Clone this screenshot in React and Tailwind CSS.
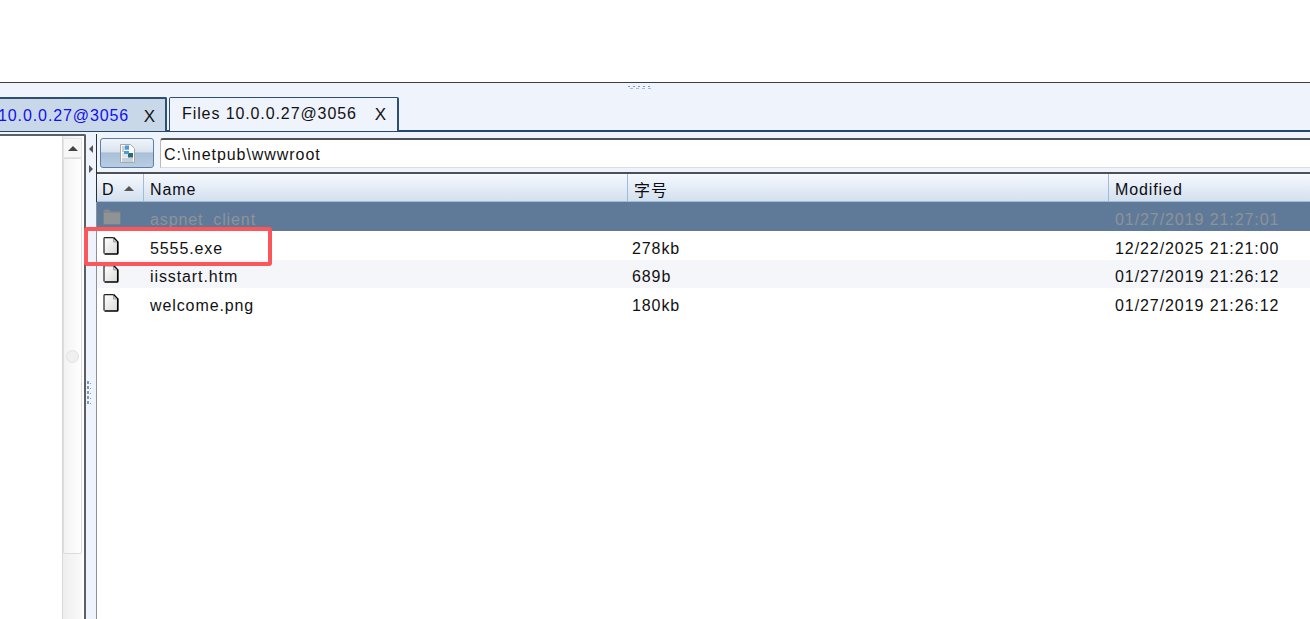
const font = { fontFamily: '"Liberation Sans", Arial, sans-serif' };

function FileIcon() {
  return (
    <svg width="16" height="18" viewBox="0 0 16 18" className="shrink-0">
      <defs>
        <linearGradient id="fg" x1="0" y1="0" x2="1" y2="1">
          <stop offset="0" stopColor="#ffffff" />
          <stop offset="1" stopColor="#d8d8d8" />
        </linearGradient>
      </defs>
      <path d="M1 1H10.5L15 5.5V17H1Z" fill="url(#fg)" />
      <path d="M1 16.5V1.5Q1 .7 1.8 .7H10.5" fill="none" stroke="#222" strokeWidth="1.2" />
      <path d="M10.5 .7L14.8 5V16Q14.8 17 13.8 17H1.5" fill="none" stroke="#000" strokeWidth="1.7" />
      <path d="M10.5 1.5V5H14" fill="#cfcfcf" stroke="#888" strokeWidth="0.7" />
    </svg>
  );
}

function FolderIcon() {
  return (
    <svg width="18" height="16" viewBox="0 0 18 16" className="shrink-0">
      <path d="M0.5 2 Q0.5 0.5 2 0.5 H6 L8 2.5 H17.5 V15.5 H0.5 Z" fill="#85888b" />
      <rect x="1" y="4" width="16" height="11" fill="#909396" />
    </svg>
  );
}

function Row({ icon, name, size, date, cls, textCls = "text-[#111]" }) {
  return (
    <div className={`flex items-center ${cls} ${textCls}`}>
      <div className="w-[47px] pl-[6px] flex items-center">{icon}</div>
      <div className="w-[482px] pl-[6px] pt-[6px] tracking-[0.9px]">{name}</div>
      <div className="w-[483px] pl-[6px] pt-[6px] tracking-[0.9px]">{size}</div>
      <div className="pl-[6px] pt-[6px] tracking-[0.92px] whitespace-nowrap">{date}</div>
    </div>
  );
}

function Th({ w, children, first }) {
  return (
    <div className={`${w} h-full flex items-center pt-[4px] ${first ? "pl-[5px]" : "pl-[6px] border-l border-[#9fbcd8]"} text-[#0c0c14] tracking-[0.9px]`}>
      {children}
    </div>
  );
}

function Grip({ vertical }) {
  const dots = [0, 1, 2, 3, 4];
  return (
    <div className={vertical ? "flex flex-col gap-[2px]" : "flex flex-col gap-[1px]"}>
      {vertical ? (
        dots.map((d) => (
          <div key={d} className="flex items-end gap-[1px]">
            <div className="w-[2px] h-[3px] bg-[#7f99b8]" />
            <div className="w-[1px] h-[1px] bg-[#7f99b8]" />
          </div>
        ))
      ) : (
        <>
          <div className="flex gap-[3px]">{dots.map((d) => <div key={d} className="w-[2px] h-[1px] bg-[#7f99b8]" />)}</div>
          <div className="flex gap-[3px] ml-[2px]">{dots.slice(1).map((d) => <div key={d} className="w-[3px] h-[1px] bg-[#a9bbd0]" />)}</div>
        </>
      )}
    </div>
  );
}

export default function App() {
  return (
    <div className="w-[1310px] h-[619px] overflow-hidden bg-white text-[16px] leading-none flex flex-col" style={font}>
      <div className="h-[82px] shrink-0 bg-white" />
      <div className="flex-1 min-h-0 flex flex-col border-t border-[#3a3f4a] bg-[#eff3fc]">
        {/* splitter grip + tabs */}
        <div className="h-[49px] shrink-0 flex flex-col border-b-2 border-[#25476b]">
          <div className="h-[14px] shrink-0 flex justify-center items-start pt-[3px] pr-[32px]">
            <Grip />
          </div>
          <div className="flex-1 flex items-stretch ml-[-20px] mb-[-1px]">
            <div className="w-[187px] flex items-center justify-between pl-[18px] pr-[9px] pt-[2px] bg-[#c9d8e9] border-t-2 border-r-2 border-[#2e4f73] rounded-tr-[2px] text-[#1010ee] tracking-[0.9px]">
              <span>10.0.0.27@3056</span>
              <span className="text-[#111] text-[17px]">X</span>
            </div>
            <div className="ml-[2px] w-[230px] flex items-center justify-between pl-[12px] pr-[10px] pb-[1px] bg-[#eff3fc] border-t border-l border-r-2 border-[#2e4f73] rounded-t-[2px] text-[#111] tracking-[0.9px]">
              <span>Files 10.0.0.27@3056</span>
              <span className="text-[17px]">X</span>
            </div>
          </div>
        </div>

        <div className="flex-1 min-h-0 flex pt-[2px]">
          {/* left pane */}
          <div className="w-[86px] shrink-0 flex bg-white border-t-2 border-r-2 border-[#5b5f66] rounded-tr-[2px]">
            <div className="w-[62px] shrink-0 bg-white" />
            <div className="w-[20px] shrink-0 flex flex-col bg-gradient-to-r from-[#eeeeee] to-[#fafafa] border-l border-[#d8d8d8]">
              <div className="h-[20px] shrink-0 flex items-center justify-center bg-[#f7f7f7] border border-[#e4e4e4] mt-[2px]">
                <div className="w-0 h-0 border-l-[5px] border-r-[5px] border-b-[5px] border-l-transparent border-r-transparent border-b-[#444]" />
              </div>
              <div className="h-[396px] shrink-0 flex items-center justify-center bg-gradient-to-r from-[#f3f3f3] to-[#ffffff] border border-[#dcdcdc] rounded-[2px]">
                <div className="w-[13px] h-[13px] rounded-full border border-[#e2e2e2] bg-[#f0f0f0]" />
              </div>
            </div>
          </div>

          {/* splitter */}
          <div className="w-[11px] shrink-0 flex flex-col items-start bg-[#eff3fc] border-r border-[#2d3038]">
            <div className="flex flex-col gap-[12px] pt-[11px] pl-[3px]">
              <div className="w-0 h-0 border-t-[4px] border-b-[4px] border-r-[4px] border-t-transparent border-b-transparent border-r-[#555]" />
              <div className="w-0 h-0 border-t-[4px] border-b-[4px] border-l-[4px] border-t-transparent border-b-transparent border-l-[#555]" />
            </div>
            <div className="pl-[1px] mt-[208px]"><Grip vertical /></div>
          </div>

          {/* right pane */}
          <div className="flex-1 min-w-0 flex flex-col bg-white">
            <div className="h-[38px] shrink-0 flex items-start gap-[6px] pl-[3px] pt-[4px] bg-[#eff3fc]">
              <button className="w-[54px] h-[30px] flex items-center justify-center rounded-[3px] border border-[#5a7fa8] bg-[linear-gradient(to_bottom,#f0f4f9_0%,#dbe4ee_45%,#a9c0d9_50%,#b9cde2_100%)]">
                <svg width="15" height="19" viewBox="0 0 15 19">
                  <path d="M.5 .5H10.5L14.5 4.5V18.5H.5Z" fill="#fbfbfb" stroke="#a8a8a8" />
                  <path d="M2 3h3M2 5h7M2 7h2M2 15h11M2 17h11" stroke="#8fa6bd" />
                  <path d="M5 1.5h4v4h-4z" fill="#4d9ad8" />
                  <rect x="2" y="9" width="11" height="4.5" fill="#d9e6ee" />
                  <rect x="8" y="9" width="5" height="4.5" fill="#2c6a74" />
                  <rect x="4" y="7" width="5" height="3" fill="#4d9ad8" />
                </svg>
              </button>
              <div className="flex-1 h-[30px] flex items-center pl-[3px] pt-[2px] bg-white border-t-2 border-l border-b border-t-[#4d5157] border-l-[#b8b8b8] border-b-[#dcdcdc] rounded-tl-[3px] text-[#111] tracking-[0.95px]">
                C:\inetpub\wwwroot
              </div>
            </div>

            <div className="h-[30px] shrink-0 flex items-center border-t-2 border-b border-t-[#4d5157] border-b-[#9fbcd8] bg-gradient-to-b from-[#f6f9fe] to-[#d3e0ee]">
              <Th w="w-[46px]" first>
                <span className="mr-[10px]">D</span>
                <span className="w-0 h-0 border-l-[5px] border-r-[5px] border-b-[5px] border-l-transparent border-r-transparent border-b-[#555] mb-[3px]" />
              </Th>
              <Th w="w-[484px]">Name</Th>
              <Th w="w-[481px]"><span className="mb-[2px]" style={{ fontFamily: '"Noto Sans CJK SC", sans-serif' }}>字号</span></Th>
              <Th w="flex-1">Modified</Th>
            </div>

            <div className="relative flex-1 flex flex-col bg-white border-l border-[#8d9096] -ml-px">
              <Row cls="h-[29px] bg-[#5f7a99]" textCls="text-[#8f9296]" icon={<FolderIcon />} name="aspnet_client" size="" date="01/27/2019 21:27:01" />
              <Row cls="h-[29px] bg-white" icon={<FileIcon />} name="5555.exe" size="278kb" date="12/22/2025 21:21:00" />
              <Row cls="h-[28px] bg-[#f5f6fa]" icon={<FileIcon />} name="iisstart.htm" size="689b" date="01/27/2019 21:26:12" />
              <Row cls="h-[29px] bg-white" icon={<FileIcon />} name="welcome.png" size="180kb" date="01/27/2019 21:26:12" />
              <div className="absolute left-[-13px] top-[25px] w-[188px] h-[39px] border-[4px] border-[#f9575c] rounded-[3px]" />
            </div>
          </div>
        </div>
      </div>
    </div>
  );
}
